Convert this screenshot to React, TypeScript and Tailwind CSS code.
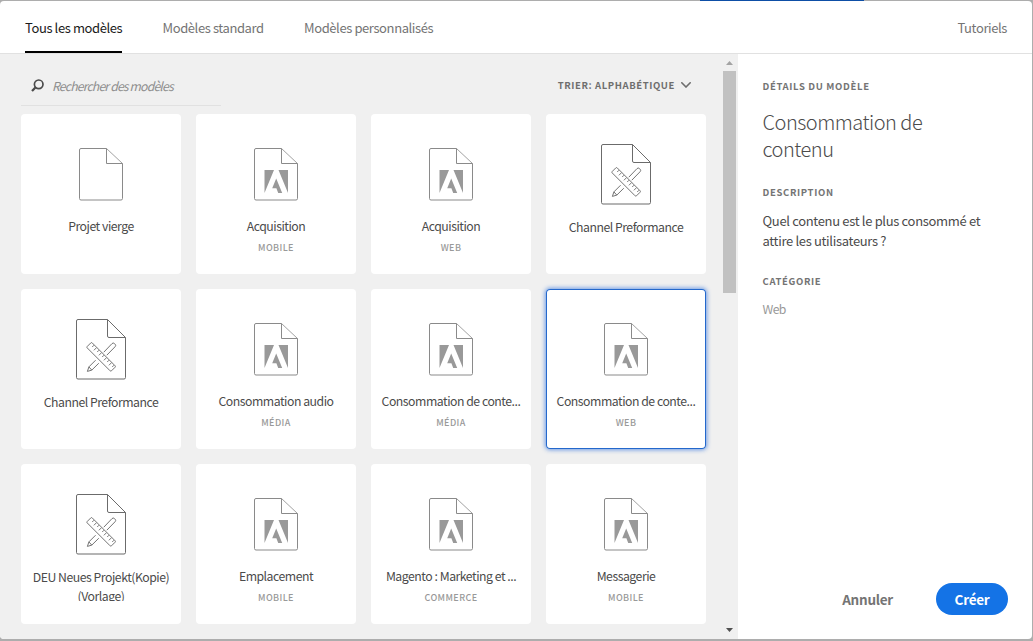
import { useState } from "react";

type Template = { title: string; tag?: string; icon: "blank" | "adobe" | "custom" };

const templates: Template[] = [
  { title: "Projet vierge", icon: "blank" },
  { title: "Acquisition", tag: "MOBILE", icon: "adobe" },
  { title: "Acquisition", tag: "WEB", icon: "adobe" },
  { title: "Channel Preformance", icon: "custom" },
  { title: "Channel Preformance", icon: "custom" },
  { title: "Consommation audio", tag: "MÉDIA", icon: "adobe" },
  { title: "Consommation de conte...", tag: "MÉDIA", icon: "adobe" },
  { title: "Consommation de conte...", tag: "WEB", icon: "adobe" },
  { title: "DEU Neues Projekt(Kopie) (Vorlage)", icon: "custom" },
  { title: "Emplacement", tag: "MOBILE", icon: "adobe" },
  { title: "Magento : Marketing et ...", tag: "COMMERCE", icon: "adobe" },
  { title: "Messagerie", tag: "MOBILE", icon: "adobe" },
];

function PageIcon({ adobe }: { adobe: boolean }) {
  return (
    <svg width="44" height="54" viewBox="0 0 44 54" fill="none" className="shrink-0">
      <path
        d="M27.5 1.5H2a1.5 1.5 0 0 0-1.5 1.5v48.500a1.500 1.500 0 0 0 1.500 1.500H42a1.500 1.500 0 0 0 1.500-1.500V16.500M27.500 1.500V16.500H43.500"
        stroke="#8a8a8a"
      />
      <path d="M27.500 1.500L43.500 16.500" stroke="#8a8a8a" strokeWidth="0.8" />
      {adobe && (
        <path
          d="M10.500 23H20L10.500 46ZM24.500 23H34V46ZM22.200 31.600L28.200 46H24.200L22.400 41.200H18.200Z"
          fill="#999999"
        />
      )}
    </svg>
  );
}

function RulerPageIcon() {
  return (
    <svg width="50" height="61" viewBox="0 0 50 61" fill="none" stroke="#6b6b6b" className="shrink-0">
      <path d="M31.500 0.500H2a1.500 1.500 0 0 0-1.500 1.500v56.500a1.500 1.500 0 0 0 1.500 1.500H48a1.500 1.500 0 0 0 1.500-1.500V18.500L31.500 0.500V17a1.500 1.500 0 0 0 1.500 1.500H49.500" />
      <g strokeWidth="0.95" strokeLinejoin="round">
        <path d="M27.800 33.200L36 24.600a1.800 1.800 0 0 1 2.500 0l.6.600a1.800 1.800 0 0 1 0 2.500L30.800 36.200M22.800 44.200L15.800 51.100L11.400 52.400L12.900 47.900L19.600 41.200M12.900 47.900L15.800 51.100" />
        <path d="M11.200 27.500L14.800 23.900a1 1 0 0 1 1.400 0L39.100 46.800a1 1 0 0 1 0 1.400L35.500 51.800a1 1 0 0 1-1.400 0L11.200 28.900a1 1 0 0 1 0-1.400Z" />
        <path
          d="M18 26.200l-1.800 1.800M20.500 28.700l-2.600 2.600M23 31.200l-1.800 1.800M25.500 33.700l-2.600 2.600M28 36.200l-1.800 1.800M30.500 38.700l-2.600 2.600M33 41.200l-1.800 1.800M35.500 43.700l-2.600 2.600M38 46.200l-1.800 1.800"
          strokeWidth="0.9"
        />
      </g>
    </svg>
  );
}

function Card({ item, selected, onSelect }: { item: Template; selected: boolean; onSelect: () => void }) {
  const custom = item.icon === "custom";
  return (
    <button
      onClick={onSelect}
      className={`flex h-40 w-40 flex-col items-center rounded bg-white ${custom ? "pt-[30px]" : "pt-[33px]"} ${
        selected ? "shadow-[inset_0_0_0_1px_#2468cc,0_0_4px_1px_rgba(38,108,220,0.65)]" : ""
      }`}
    >
      {custom ? <RulerPageIcon /> : <PageIcon adobe={item.icon === "adobe"} />}
      {custom ? (
        <span className="mt-[12.500px] h-[33.500px] w-[146px] overflow-hidden text-[12.250px] leading-[19px] tracking-[-0.480px] text-[#4b4b4b]">
          {item.title}
        </span>
      ) : (
        <span className="mt-[15px] text-[12.250px] leading-5 tracking-[-0.480px] whitespace-nowrap text-[#4b4b4b]">
          {item.title}
        </span>
      )}
      {item.tag && (
        <span className="mt-1.5 text-[9px] leading-3 font-medium tracking-[0.400px] text-[#999999]">{item.tag}</span>
      )}
    </button>
  );
}

function Label({ children }: { children: string }) {
  return <h3 className="text-[9.500px] leading-4 font-bold tracking-[0.650px] text-[#747474]">{children}</h3>;
}

export default function App() {
  const [selected, setSelected] = useState(7);
  return (
    <div className="flex h-[641px] w-[1033px] flex-col overflow-hidden bg-[#adadad] font-['Noto_Sans_CJK_JP',sans-serif]">
      <div className="flex h-px shrink-0 pl-[700px]">
        <div className="w-[164px] bg-[#0d4ea6]" />
      </div>
      <div className="flex h-[638px] w-[1032px] flex-col overflow-hidden rounded bg-white">
        <header className="flex h-[53px] shrink-0 items-stretch border-b border-[#e1e1e1] px-[25px] text-[13px] leading-[53px] tracking-[-0.400px] text-[#747474]">
          <div className="w-[97px] border-b-2 border-black whitespace-nowrap text-[#1a1a1a]">Tous les modèles</div>
          <div className="ml-[40.500px] w-[102px] whitespace-nowrap">Modèles standard</div>
          <div className="ml-[39.500px] whitespace-nowrap">Modèles personnalisés</div>
          <div className="ml-auto">Tutoriels</div>
        </header>
        <div className="flex min-h-0 flex-1">
          <main className="flex w-[738px] bg-[#f0f0f0]">
            <div className="w-[723px] pl-[21px]">
              <div className="flex h-[60px] w-[685px] items-start justify-between">
                <div className="flex h-[52px] w-[200px] items-center gap-2 border-b border-[#e1e1e1] pt-[12px] pl-2.5">
                  <svg width="13" height="13" viewBox="0 0 13 13" fill="none" stroke="#4b4b4b" className="shrink-0">
                    <circle cx="7.700" cy="5.300" r="4.300" strokeWidth="1.700" />
                    <path d="M4.700 8.300L1 12" strokeWidth="2.300" />
                  </svg>
                  <span className="text-[12.250px] leading-5 tracking-[-0.850px] whitespace-nowrap text-[#8e8e8e] italic">
                    Rechercher des modèles
                  </span>
                </div>
                <div className="flex items-center gap-1.5 pt-[23px] pr-[15px] text-[9.500px] leading-4 font-bold tracking-[0.600px] text-[#6e6e6e]">
                  <span>TRIER: ALPHABÉTIQUE</span>
                  <svg width="10" height="6" viewBox="0 0 10 6" fill="none" stroke="#6e6e6e" strokeWidth="1.600">
                    <path d="M0.800 0.800L5 5L9.200 0.800" strokeLinecap="round" />
                  </svg>
                </div>
              </div>
              <div className="grid w-[685px] grid-cols-4 gap-[15px]">
                {templates.map((t, i) => (
                  <Card key={i} item={t} selected={i === selected} onSelect={() => setSelected(i)} />
                ))}
              </div>
            </div>
            <div className="flex w-[13px] flex-col items-center pt-[7px] pb-[7px]">
              <svg width="7" height="4" viewBox="0 0 7 4" fill="#a3a3a3" className="shrink-0">
                <path d="M3.500 0L7 4H0Z" />
              </svg>
              <div className="mt-1.5 h-[222px] w-[13px] bg-[#c1c1c1]" />
              <svg width="7" height="4" viewBox="0 0 7 4" fill="#505050" className="mt-auto shrink-0">
                <path d="M0 0H7L3.500 4Z" />
              </svg>
            </div>
          </main>
          <aside className="flex flex-1 flex-col pt-[24px] pr-6 pb-6 pl-[24.500px]">
            <Label>DÉTAILS DU MODÈLE</Label>
            <h2 className="mt-[14px] w-[200px] text-[20px] leading-[27px] font-light tracking-[-0.500px] text-[#4b4b4b]">
              Consommation de contenu
            </h2>
            <div className="mt-[22px]">
              <Label>DESCRIPTION</Label>
            </div>
            <p className="mt-[11px] text-[13px] leading-5 tracking-[-0.330px] whitespace-nowrap text-[#4b4b4b]">
              Quel contenu est le plus consommé et
              <br />
              attire les utilisateurs ?
            </p>
            <div className="mt-[22px]">
              <Label>CATÉGORIE</Label>
            </div>
            <p className="mt-[10px] text-[12.250px] leading-5 tracking-[-0.600px] text-[#999999]">Web</p>
            <div className="mt-auto flex items-center justify-end gap-[43px] text-[13.500px] leading-5 font-bold tracking-[-0.250px]">
              <button className="text-[#747474]">Annuler</button>
              <button className="h-8 w-[72px] rounded-full bg-[#1473e6] text-white">Créer</button>
            </div>
          </aside>
        </div>
      </div>
    </div>
  );
}
